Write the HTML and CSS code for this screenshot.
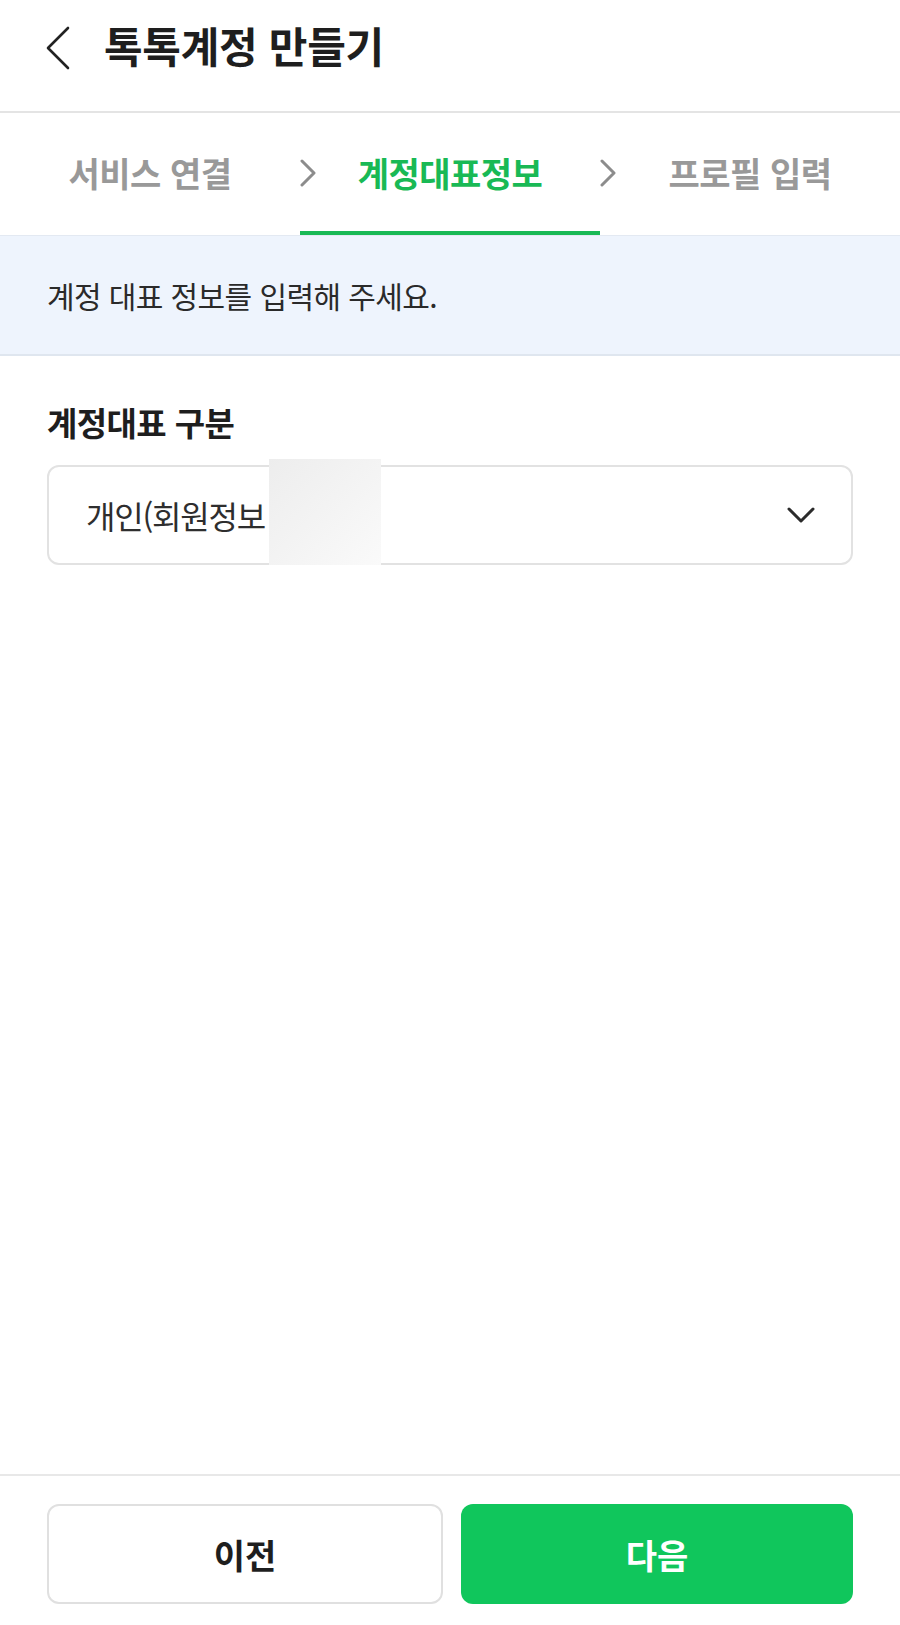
FILE: index.html
```html
<!DOCTYPE html>
<html lang="ko">
<head>
  <meta charset="UTF-8">
  <title>톡톡계정 만들기</title>
  <link rel="stylesheet" href="styles.css">
</head>
<body>

<div class="page">
  <div class="header">
    <svg class="back" width="24" height="44" viewBox="0 0 24 44">
      <polyline points="22,2 2,22 22,42" fill="none" stroke="#222" stroke-width="2.6" stroke-linecap="round" stroke-linejoin="round"/>
    </svg>
    <h1>톡톡계정 만들기</h1>
  </div>

  <!-- 단계 탭 -->
  <div class="steps">
    <div class="step">서비스 연결</div>
    <div class="step active">
      <svg class="step-arrow" width="16" height="28" viewBox="0 0 16 28">
        <polyline points="2,2 14,14 2,26" fill="none" stroke="#8c8c8c" stroke-width="3" stroke-linecap="round" stroke-linejoin="round"/>
      </svg>
      계정대표정보
    </div>
    <div class="step">
      <svg class="step-arrow" width="16" height="28" viewBox="0 0 16 28">
        <polyline points="2,2 14,14 2,26" fill="none" stroke="#8c8c8c" stroke-width="3" stroke-linecap="round" stroke-linejoin="round"/>
      </svg>
      프로필 입력
    </div>
  </div>

  <div class="notice">계정 대표 정보를 입력해 주세요.</div>

  <div class="form">
    <div class="label">계정대표 구분</div>
    <div class="field">
      <div class="select">
        <span>개인(회원정보</span>
        <svg width="28" height="16" viewBox="0 0 28 16">
          <polyline points="2,2 14,14 26,2" fill="none" stroke="#2b2b2b" stroke-width="3" stroke-linecap="round" stroke-linejoin="round"/>
        </svg>
      </div>
      <div class="mask"></div>
    </div>
  </div>

  <div class="footer">
    <button class="btn btn-prev">이전</button>
    <button class="btn btn-next">다음</button>
  </div>
</div>

</body>
</html>
```

FILE: styles.css
```css
body {
  margin: 0;
  padding: 0;
  background: #ffffff;
  font-family: "Noto Sans CJK KR", "Noto Sans", sans-serif;
  color: #222;
}

.page {
  display: flex;
  flex-direction: column;
  min-height: 100vh;
}

.header {
  height: 113px;
  box-sizing: border-box;
  display: flex;
  align-items: center;
  padding: 0 0 16px 46px;
  border-bottom: 2px solid #e4e4e4;
}

.back {
  display: block;
}

.header h1 {
  margin: -6px 0 0 34px;
  font-size: 42px;
  font-weight: 700;
  line-height: 1;
  color: #1e1e1e;
  letter-spacing: -0.3px;
}

.steps {
  display: grid;
  grid-template-columns: repeat(3, 1fr);
  height: 122px;
}

.step {
  position: relative;
  display: flex;
  align-items: center;
  justify-content: center;
  font-size: 34px;
  font-weight: 700;
  color: #999;
  padding-bottom: 4px;
  box-sizing: border-box;
  letter-spacing: -0.5px;
}

.step.active {
  color: #19b955;
  border-bottom: 4px solid #19b955;
  padding-bottom: 0;
}

.step-arrow {
  position: absolute;
  left: 0;
  top: 46px;
}

.notice {
  height: 118px;
  background: #eef4fd;
  border-top: 1px solid #e3e9f2;
  border-bottom: 2px solid #dfe6ef;
  display: flex;
  align-items: center;
  padding-left: 47px;
  font-size: 30px;
  color: #2a2a2a;
  letter-spacing: -0.6px;
}

.form {
  padding: 44px 47px 0 47px;
}

.label {
  font-size: 33px;
  font-weight: 700;
  line-height: 44px;
  color: #1e1e1e;
  letter-spacing: -0.6px;
}

.field {
  position: relative;
  margin-top: 21px;
}

.select {
  height: 96px;
  border: 2px solid #e2e2e2;
  border-radius: 12px;
  display: flex;
  align-items: center;
  justify-content: space-between;
  padding: 0 36px 0 37px;
  font-size: 32px;
  color: #2e2e2e;
  letter-spacing: -1.2px;
}

.select svg {
  display: block;
}

.mask {
  position: absolute;
  left: 222px;
  top: -6px;
  width: 112px;
  height: 106px;
  background: linear-gradient(135deg, #ededed 0%, #f4f4f4 55%, #fafafa 100%);
}

.footer {
  margin-top: auto;
  border-top: 2px solid #e8e8e8;
  padding: 28px 47px 21px 47px;
  display: flex;
  gap: 18px;
}

.btn {
  flex: 1;
  height: 100px;
  border-radius: 12px;
  font-family: "Noto Sans CJK KR", "Noto Sans", sans-serif;
  font-size: 34px;
  font-weight: 700;
  cursor: pointer;
}

.btn-prev {
  background: #ffffff;
  border: 2px solid #e0e0e0;
  color: #1e1e1e;
}

.btn-next {
  background: #10c65c;
  border: none;
  color: #ffffff;
}
```
